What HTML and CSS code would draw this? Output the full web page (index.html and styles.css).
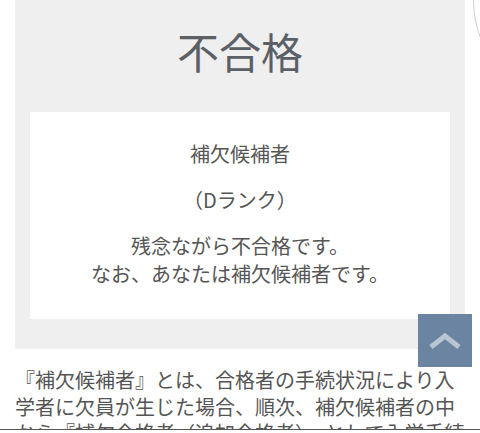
FILE: index.html
```html
<!DOCTYPE html>
<html lang="ja">
<head>
<meta charset="utf-8">
<link rel="stylesheet" href="styles.css">
</head>
<body>
<div class="deco"><div class="deco-circle"></div></div>
<main class="page">
  <section class="result">
    <h1 class="result-title">不合格</h1>
    <div class="result-card">
      <p class="card-line">補欠候補者</p>
      <p class="card-line">（Dランク）</p>
      <p class="card-line">残念ながら不合格です。<br>なお、あなたは補欠候補者です。</p>
    </div>
  </section>
  <p class="note">『補欠候補者』とは、合格者の手続状況により入学者に欠員が生じた場合、順次、補欠候補者の中から『補欠合格者（追加合格者）』として入学手続きの案内をするものです。</p>
</main>
<a class="to-top" href="#" aria-label="ページトップへ">
  <svg width="32" height="16" viewBox="0 0 32 16"><path d="M2 14 L16 3 L30 14" fill="none" stroke="#b8c6d4" stroke-width="5"/></svg>
</a>
<div class="footer-bar"></div>
</body>
</html>
```

FILE: styles.css
```css
* { box-sizing: border-box; }
html, body { margin: 0; padding: 0; background: #fff; overflow: hidden; height: 433px; }
body {
  font-family: "Noto Sans CJK JP", "Noto Sans", sans-serif;
  color: #555;
}
.page {
  padding: 0 15px;
  height: 429px;
  overflow: hidden;
}
.result {
  background: #efefef;
  padding: 20px 15px 30px;
}
.result-title {
  margin: 0 0 30px;
  font-size: 42px;
  line-height: 62px;
  font-weight: 400;
  color: #5b6066;
  text-align: center;
}
.result-card {
  background: #fff;
  padding: 28px 15px 31px;
  text-align: center;
}
.card-line {
  margin: 18px 0 0;
  font-size: 20px;
  line-height: 28px;
  color: #555;
}
.card-line:first-child { margin-top: 0; }
.note {
  margin: 18px 0 0;
  font-size: 20px;
  line-height: 26.5px;
  color: #555;
}
.to-top {
  position: fixed;
  left: 418px;
  top: 314px;
  width: 54px;
  height: 53px;
  background: #6b84a2;
  display: flex;
  align-items: center;
  justify-content: center;
}
.deco {
  position: absolute;
  right: 0;
  top: 0;
  width: 7px;
  height: 48px;
  overflow: hidden;
}
.deco-circle {
  margin-top: -107px;
  width: 214px;
  height: 214px;
  border: 1px solid #cfcfcf;
  border-radius: 50%;
}
.footer-bar {
  position: fixed;
  left: 0;
  right: 0;
  top: 429px;
  bottom: 0;
  background: #fff;
  border-top: 1px solid #555;
}
```
